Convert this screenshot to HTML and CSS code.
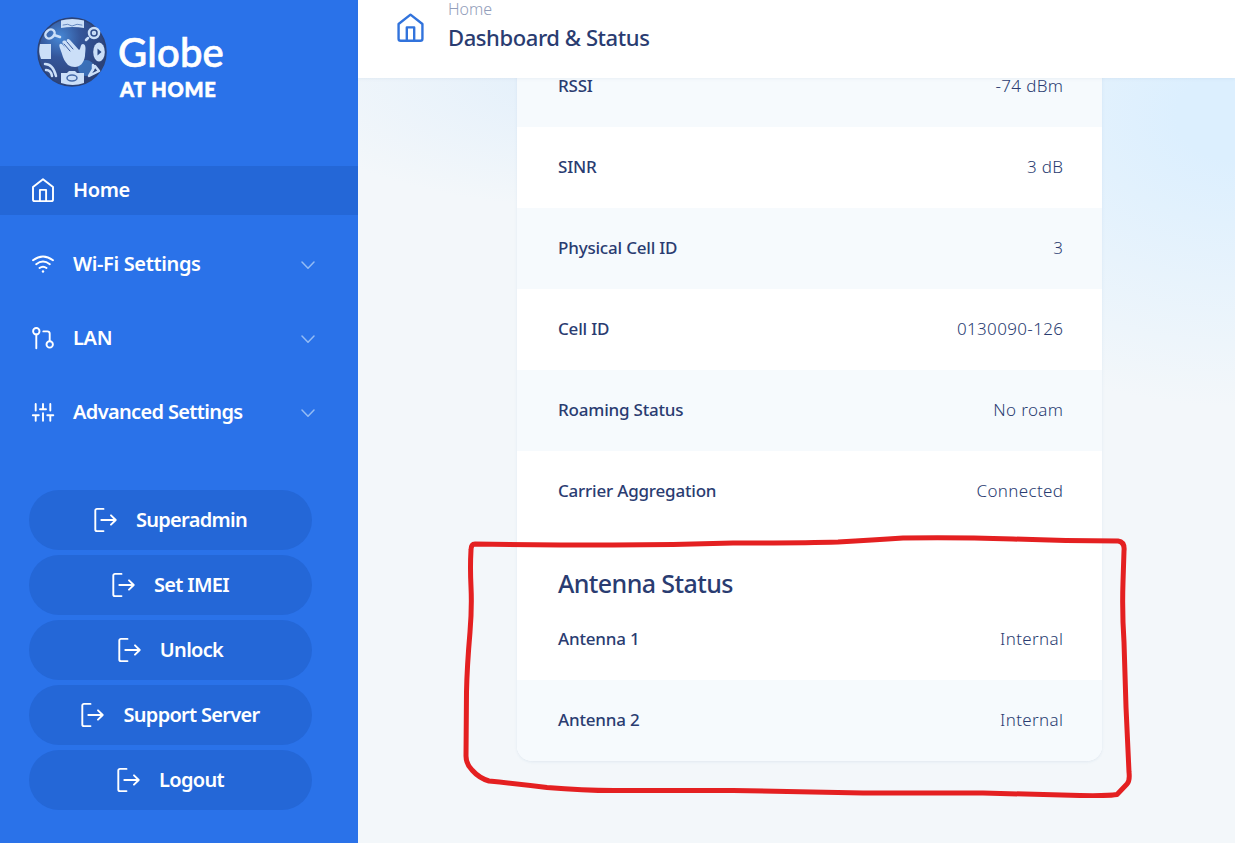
FILE: index.html
```html
<!DOCTYPE html>
<html lang="en">
<head>
  <meta charset="UTF-8" />
  <meta name="viewport" content="width=device-width, initial-scale=1.0"/>
  <title>Globe At Home - Dashboard</title>
  <link rel="stylesheet" href="styles.css">
</head>
<body>
  <!-- shared icons -->
  <svg class="sprite">
    <symbol id="icon-home" viewBox="0 0 24 26">
      <path d="M2 10.100 12 2.200l10 7.900v12.300a1.700 1.700 0 0 1-1.700 1.700H3.700A1.700 1.700 0 0 1 2 22.400zM8.900 24V12.900h6.200V24"/>
    </symbol>
    <symbol id="icon-chevron" viewBox="0 0 14 9">
      <path d="M1 1l6 6.200L13 1"/>
    </symbol>
    <symbol id="icon-exit" viewBox="0 0 24 26">
      <path d="M10.500 1.900H4a1.700 1.700 0 0 0-1.700 1.700v18.800A1.700 1.700 0 0 0 4 24.100h6.500M8.300 13h14.200M18 8.300l4.700 4.700-4.700 4.700"/>
    </symbol>
  </svg>

  <div class="app">
    <aside class="sidebar">
      <div class="logo">
        <svg class="globe" viewBox="0 0 70 70">
          <defs>
            <radialGradient id="globe-fill" cx=".32" cy=".28" r=".75">
              <stop offset="0" stop-color="#4788d6"/>
              <stop offset=".4" stop-color="#34569a"/>
              <stop offset="1" stop-color="#2b4178"/>
            </radialGradient>
          </defs>
          <circle cx="35" cy="35" r="34" fill="url(#globe-fill)" stroke="#2c4275" stroke-width="1.5"/>
          <circle cx="49" cy="51" r="8" fill="#4289d8" opacity=".6"/>
          <g fill="#cbdff8">
            <path d="M24 3.500q11-3 23 0v7.500q-11-2-23 0z"/>
            <path d="M3 27h11v15H4q-3-7-1-15z"/>
            <path d="M24 56h6l2-2h6l2 2h7v10q-11 4-23 0z"/>
            <ellipse cx="62" cy="35" rx="5.800" ry="9.500"/>
            <path d="M31 48c-3-3-5-7-6-11-1-4-4-9-2-10s3 1 5 4c-1-3-4-6-2-7s3 0 4 1c-1-3 1-4 3-2l9 10c2-1 1-6 4-6 4 1 2 7 2 12-1 7-5 11-10 11-3 0-5-1-7-2z"/>
          </g>
          <path d="M27 27l6 7M30 25l6 7" fill="none" stroke="#34569a" stroke-width="1"/>
          <g fill="none" stroke="#cbdff8" stroke-width="2.500">
            <ellipse cx="13" cy="17" rx="5" ry="4" transform="rotate(-40 13 17)"/>
            <path d="M17 18l6 2M8 47q8 0 11 12M9 53q5 0 6 6"/>
            <circle cx="57" cy="16" r="5"/>
            <circle cx="57" cy="16" r="1"/>
            <path d="M51 21l-2 2M52 59l10-5-4-5zM56 48v5"/>
          </g>
          <path d="M60.500 31.500l4 3.500-4 3.500z" fill="#2b4986"/>
          <path d="M26 8q5-2 9 1 5-3 10-1" fill="none" stroke="#6588bf"/>
          <ellipse cx="35" cy="61" rx="5" ry="3" fill="none" stroke="#456aa9" stroke-width="1.500"/>
        </svg>
        <div class="brand">
          <span class="brand-name">Globe</span>
          <span class="brand-sub">AT HOME</span>
        </div>
      </div>

      <nav class="menu">
        <a class="menu-item active">
          <svg class="menu-icon"><use href="#icon-home"/></svg>
          <span>Home</span>
        </a>
        <a class="menu-item">
          <svg class="menu-icon" viewBox="0 0 24 26">
            <path d="M2 9.300q10-7.600 20 0M5.200 13.200q6.800-5.400 13.600 0M8.500 17q3.500-2.700 7 0"/>
            <circle class="dot" cx="12" cy="20.500" r="1.200"/>
          </svg>
          <span>Wi-Fi Settings</span>
          <svg class="chevron"><use href="#icon-chevron"/></svg>
        </a>
        <a class="menu-item">
          <svg class="menu-icon" viewBox="0 0 24 26">
            <circle cx="5.300" cy="6.200" r="3.200"/>
            <circle cx="18.700" cy="19.400" r="3.200"/>
            <path d="M5.300 9.400v13.800M12.300 6.400h4.200a2.200 2.200 0 0 1 2.200 2.200v7.500"/>
          </svg>
          <span>LAN</span>
          <svg class="chevron"><use href="#icon-chevron"/></svg>
        </a>
        <a class="menu-item advanced">
          <svg class="menu-icon" viewBox="0 0 24 26">
            <path d="M4.700 5v6.500M1.800 16.300h6M4.700 16.300v5.500M12 5v5.200M9 10.200h6M12 14.300v7.500M19.300 5v6.500M16.300 16.300h6M19.300 16.300v5.500"/>
          </svg>
          <span>Advanced Settings</span>
          <svg class="chevron"><use href="#icon-chevron"/></svg>
        </a>
      </nav>

      <div class="actions">
        <button><svg><use href="#icon-exit"/></svg><span>Superadmin</span></button>
        <button><svg><use href="#icon-exit"/></svg><span>Set IMEI</span></button>
        <button><svg><use href="#icon-exit"/></svg><span>Unlock</span></button>
        <button><svg><use href="#icon-exit"/></svg><span>Support Server</span></button>
        <button><svg><use href="#icon-exit"/></svg><span>Logout</span></button>
      </div>
    </aside>

    <main class="main">
      <header class="header">
        <svg class="header-icon"><use href="#icon-home"/></svg>
        <div>
          <div class="breadcrumb">Home</div>
          <h1>Dashboard &amp; Status</h1>
        </div>
      </header>

      <div class="content">
        <section class="card">
          <div class="row shaded"><b>RSSI</b><span>-74 dBm</span></div>
          <div class="row"><b>SINR</b><span>3 dB</span></div>
          <div class="row shaded"><b>Physical Cell ID</b><span>3</span></div>
          <div class="row"><b>Cell ID</b><span>0130090-126</span></div>
          <div class="row shaded"><b>Roaming Status</b><span>No roam</span></div>
          <div class="row"><b>Carrier Aggregation</b><span>Connected</span></div>
          <h2>Antenna Status</h2>
          <div class="row"><b>Antenna 1</b><span>Internal</span></div>
          <div class="row shaded"><b>Antenna 2</b><span>Internal</span></div>
        </section>
      </div>
    </main>
  </div>

  <!-- hand drawn marker round the antenna section -->
  <svg class="marker" viewBox="0 0 670 266">
    <path d="M12 12Q8 12 8 18Q7 35 8 55Q9 75 7 100Q4 135 3.500 160L3 224Q3 232 9 238Q16 246 26 249Q55 252 84 255.500Q125 259 160 258.500L270 258.500L400 261L520 261Q590 263 617 263.500Q645 264 654 262.500L664 252Q667 249 666 240L663 175L661 110Q659 80 660 50L661 19Q662 10 655 9Q600 9 550 7Q490 5 440 6Q410 8 375 10Q340 11 270 11Q210 13 150 13Q80 13 12 12Z"/>
  </svg>
</body>
</html>
```
FILE: styles.css
```css
* {
  box-sizing: border-box;
}
body {
  margin: 0;
  font-family: "Noto Sans", "Open Sans", sans-serif;
  color: #2a3c71;
  overflow: hidden;
}
svg {
  flex: none;
  fill: none;
  stroke: currentColor;
  stroke-linecap: round;
  stroke-linejoin: round;
}
.sprite {
  display: none;
}
.app {
  display: flex;
  height: 100vh;
}

/* sidebar */
.sidebar {
  width: 358px;
  flex: none;
  background: #2a72e9;
  color: #fff;
}
.logo {
  display: flex;
  height: 166px;
  padding: 17px 0 0 37px;
}
.globe {
  width: 70px;
  height: 70px;
  stroke: none;
}
.brand {
  display: flex;
  flex-direction: column;
  padding: 12px 0 0 11px;
  font-family: Lato, sans-serif;
}
.brand-name {
  font-size: 40px;
  line-height: 47px;
  font-weight: 500;
  letter-spacing: .2px;
  -webkit-text-stroke: .7px #fff;
}
.brand-sub {
  margin-left: 2px;
  font-size: 20px;
  line-height: 26px;
  font-weight: 900;
  letter-spacing: .8px;
  -webkit-text-stroke: .6px #fff;
}
.menu {
  display: flex;
  flex-direction: column;
  gap: 25px;
}
.menu-item {
  display: flex;
  align-items: center;
  height: 49px;
  padding: 0 43px 0 31px;
  font-size: 20px;
  font-weight: 600;
  letter-spacing: -.35px;
}
.menu-item.advanced {
  letter-spacing: -.65px;
}
.menu-item.active {
  background: #2467d7;
}
.menu-item span {
  margin-left: 18px;
  line-height: 28px;
  padding-bottom: 2px;
}
.menu-icon {
  width: 24px;
  height: 26px;
  margin-bottom: 1px;
  stroke-width: 1.9;
}
.dot {
  fill: #fff;
  stroke: none;
}
.chevron {
  width: 14px;
  height: 9px;
  margin-left: auto;
  margin-top: 2px;
  color: #94bcf5;
  stroke-width: 1.5;
}
.actions {
  display: flex;
  flex-direction: column;
  gap: 5px;
  padding: 53px 46px 0 29px;
}
.actions button {
  display: flex;
  align-items: center;
  justify-content: center;
  gap: 19px;
  height: 60px;
  padding: 0 1px 0 0;
  border: none;
  border-radius: 30px;
  background: #2467d7;
  color: #fff;
  font: 600 20px "Noto Sans", sans-serif;
  letter-spacing: -.7px;
}
.actions svg {
  width: 24px;
  height: 26px;
  stroke-width: 1.9;
}
.actions span {
  padding-bottom: 1px;
}

/* page */
.main {
  display: flex;
  flex-direction: column;
  flex: 1;
}
.header {
  display: flex;
  flex: none;
  height: 78px;
  padding-left: 38px;
  background: #fff;
  box-shadow: 0 1px 3px rgba(80, 110, 150, .08);
  z-index: 1;
}
.header-icon {
  width: 29px;
  height: 31px;
  margin: 12px 23px 0 0;
  color: #3173dc;
  stroke-width: 2;
}
.breadcrumb {
  font-size: 16px;
  line-height: 18px;
  font-weight: 300;
  color: #929dba;
}
h1 {
  margin: 4px 0 0;
  font-size: 22px;
  line-height: 30px;
  font-weight: 500;
  letter-spacing: -.42px;
}
.content {
  flex: 1;
  min-height: 0;
  padding-left: 159px;
  background:
    radial-gradient(ellipse 390px 290px at 100% 5%, #dceffe 15%, #dceffe00 100%),
    radial-gradient(ellipse 330px 130px at 27% 0, #e2effb, #e2effb00),
    #f3f7fa;
}
.card {
  width: 585px;
  margin-top: -32px;
  background: #fff;
  border-radius: 15px;
  box-shadow: 0 1px 3px rgba(100, 140, 180, .13);
  overflow: hidden;
}
.row {
  display: flex;
  justify-content: space-between;
  align-items: center;
  height: 81px;
  padding: 0 39px 2px 41px;
  font-size: 17px;
}
.row.shaded {
  background: #f6fafd;
}
.row b {
  font-weight: 500;
  letter-spacing: -.2px;
}
.row span {
  font-weight: 300;
  letter-spacing: .35px;
  margin-right: -.35px;
}
h2 {
  height: 67px;
  margin: 0;
  padding: 34px 0 0 41px;
  font-size: 25px;
  line-height: 34px;
  font-weight: 500;
  letter-spacing: -.6px;
}

.marker {
  position: absolute;
  left: 463px;
  top: 532px;
  width: 670px;
  height: 266px;
  color: #e42021;
  stroke-width: 5;
  pointer-events: none;
  z-index: 2;
}
```
